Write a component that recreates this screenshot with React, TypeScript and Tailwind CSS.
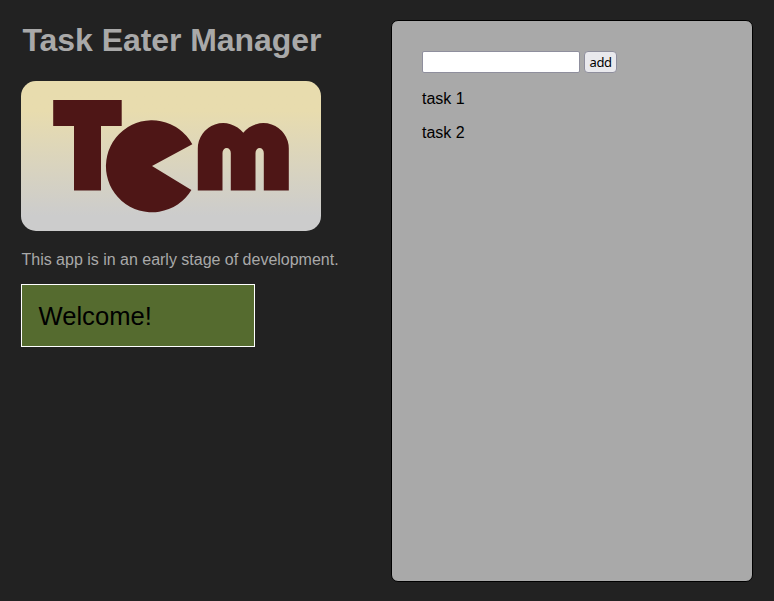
function Logo() {
  return (
    <div className="h-[150px] w-[300px] rounded-[15px] bg-linear-to-b from-[#e8dcae] from-20% to-[#cccccc] to-90%">
      <svg viewBox="0 0 300 150" className="block h-full w-full" fill="#4e1616" role="img">
        <path d="M32.2 19H100.7V45H80V109.5H53V45H32.2Z" />
        <path d="M131 85L171.3 63.2A46 46 0 1 0 170.4 108.9Z" />
        <path d="M176.8 109.5V67.5A25.5 25.5 0 0 1 222.3 51.8A25.5 25.5 0 0 1 267.8 67.5V109.5H242.8V72A4.15 5 0 0 0 234.5 72V109.5H209.8V72A4.15 5 0 0 0 201.5 72V109.5Z" />
      </svg>
    </div>
  );
}

const tasks = ["task 1", "task 2"];

export default function App() {
  return (
    <div className="flex h-[601px] w-[774px] bg-[#222222] font-['Liberation_Sans',Arial,sans-serif] text-base leading-[18px]">
      <section className="ml-[21px] w-[370px] pt-[22px] text-[#a9a9a9]">
        <h1 className="mb-[22px] pl-[1.5px] text-[32px] leading-[37px] font-bold tracking-[-0.06px] whitespace-nowrap">
          Task Eater Manager
        </h1>
        <Logo />
        <p className="mt-5 mb-[15px] pl-[0.5px] tracking-[-0.01px]">This app is in an early stage of development.</p>
        <div className="flex h-[63px] w-[234px] items-center border border-white bg-[#556b2f] pl-[16.5px] text-[25.6px] text-black">
          Welcome!
        </div>
      </section>
      <main className="mt-5 h-[562px] w-[362px] rounded-[7px] border border-black bg-[#a9a9a9] px-[30px] pt-[30px] text-black">
        <form className="mb-[17px] flex gap-1" onSubmit={(event) => event.preventDefault()}>
          <input className="h-[22px] w-[158px] rounded-[2px] border border-[#8f8f9d] bg-white px-1" />
          <button className="h-[22px] w-[33px] rounded border border-[#8f8f9d] bg-[#e9e9ed] pb-px font-['Noto_Sans',sans-serif] text-[13px] tracking-[-0.5px]">
            add
          </button>
        </form>
        <ul className="flex flex-col gap-4">
          {tasks.map((task) => (
            <li key={task}>{task}</li>
          ))}
        </ul>
      </main>
    </div>
  );
}
